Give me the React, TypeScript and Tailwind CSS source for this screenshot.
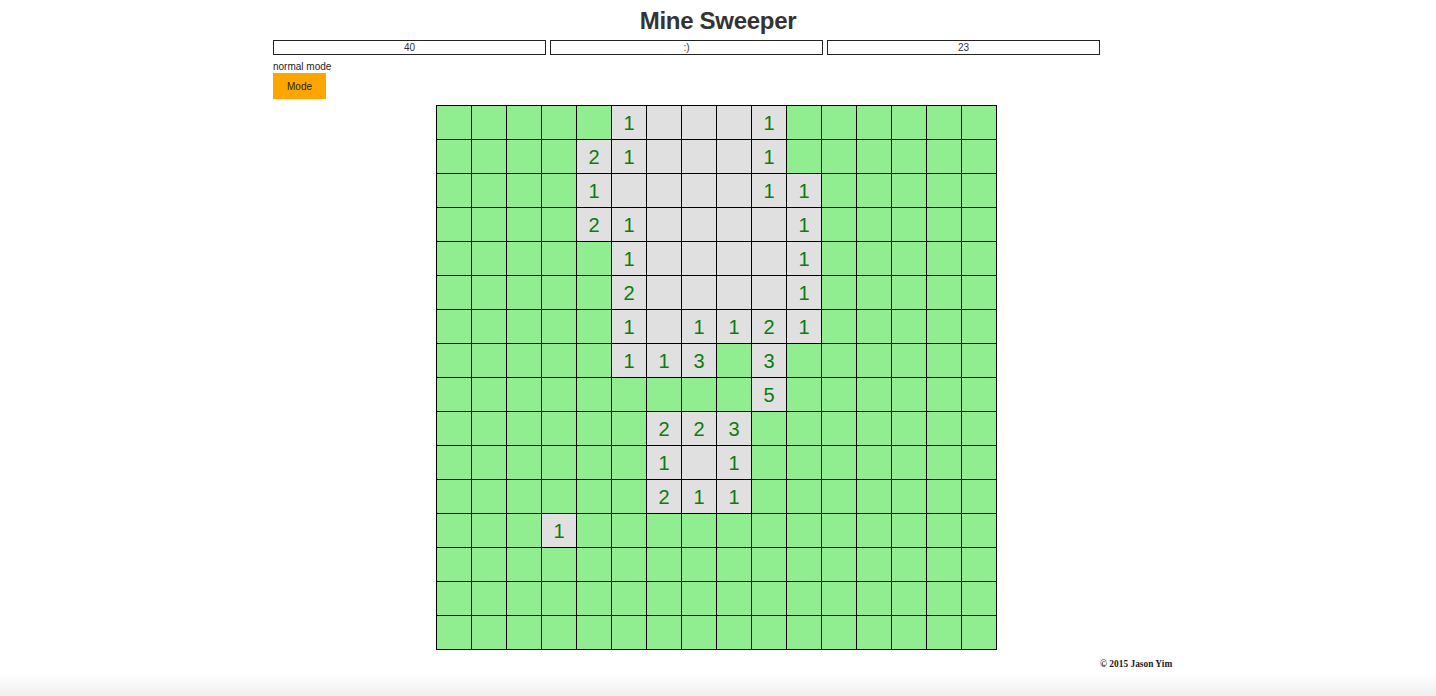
import React from "react";

// G = hidden (green), E = revealed empty, digit = revealed number
const rows: string[] = [
  "GGGGG1EEE1GGGGGG",
  "GGGG21EEE1GGGGGG",
  "GGGG1EEEE11GGGGG",
  "GGGG21EEEE1GGGGG",
  "GGGGG1EEEE1GGGGG",
  "GGGGG2EEEE1GGGGG",
  "GGGGG1E1121GGGGG",
  "GGGGG113G3GGGGGG",
  "GGGGGGGGG5GGGGGG",
  "GGGGGG223GGGGGGG",
  "GGGGGG1E1GGGGGGG",
  "GGGGGG211GGGGGGG",
  "GGG1GGGGGGGGGGGG",
  "GGGGGGGGGGGGGGGG",
  "GGGGGGGGGGGGGGGG",
  "GGGGGGGGGGGGGGGG",
];

export default function App() {
  return (
    <div
      className="w-[1436px] h-[696px] bg-white flex flex-col relative overflow-hidden"
      style={{ fontFamily: '"Liberation Sans", Arial, sans-serif' }}
    >
      <h1 className="text-[24px] leading-[28px] font-bold text-[#333] text-center mt-[7px] tracking-[-0.3px]">
        Mine Sweeper
      </h1>
      <div className="flex gap-[4px] ml-[273px] mt-[5px]">
        {["40", ":)", "23"].map((t, i) => (
          <div
            key={i}
            className="w-[273px] h-[15px] border border-[#222] flex items-center justify-center text-[10px] leading-none text-[#333]"
          >
            {t}
          </div>
        ))}
      </div>
      <div className="ml-[273px] mt-[6px] text-[10px] leading-[12px] text-[#222]">normal mode</div>
      <div className="ml-[273px] w-[53px] h-[26px] bg-[#ffa500] flex items-center justify-center text-[10px] text-[#222]">
        Mode
      </div>
      <div className="ml-[436px] mt-[6px] w-[561px] border-t border-l border-black flex flex-col">
        {rows.map((r, ri) => (
          <div key={ri} className="flex">
            {r.split("").map((c, ci) => (
              <div
                key={ci}
                className={
                  "w-[35px] h-[34px] border-r border-b border-black flex items-center justify-center text-[20px] text-[#0a7d0a] " +
                  (c === "G" ? "bg-[#90ee90]" : "bg-[#e0e0e0]")
                }
              >
                {c !== "G" && c !== "E" ? c : ""}
              </div>
            ))}
          </div>
        ))}
      </div>
      <div
        className="ml-[1100px] mt-[7px] text-[9.4px] font-bold text-[#222]"
        style={{ fontFamily: '"Liberation Serif", "Times New Roman", serif' }}
      >
        © 2015 Jason Yim
      </div>
      <div className="absolute left-0 right-0 bottom-0 h-[22px] bg-gradient-to-b from-white to-[#efefef]" />
    </div>
  );
}
